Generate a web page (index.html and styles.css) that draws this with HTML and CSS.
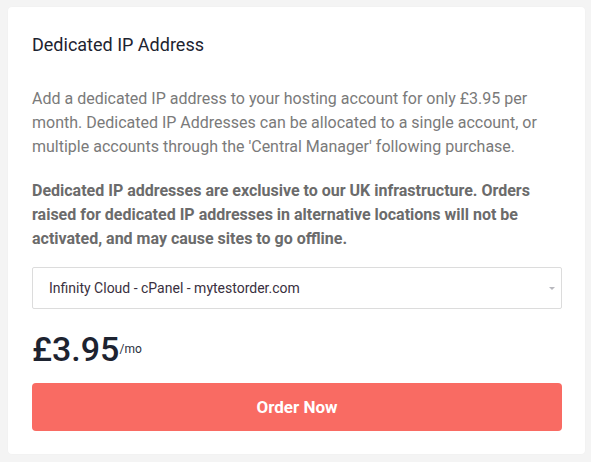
FILE: index.html
```html
<!DOCTYPE html>
<html>
<head>
<meta charset="utf-8">
<link rel="stylesheet" href="styles.css">
</head>
<body>
<div class="card">
  <h2 class="title">Dedicated IP Address</h2>
  <p class="desc">Add a dedicated IP address to your hosting account for only £3.95 per month. Dedicated IP Addresses can be allocated to a single account, or multiple accounts through the 'Central Manager' following purchase.</p>
  <p class="warn">Dedicated IP addresses are exclusive to our UK infrastructure. Orders raised for dedicated IP addresses in alternative locations will not be activated, and may cause sites to go offline.</p>
  <div class="select">
    <span class="select-text">Infinity Cloud - cPanel - mytestorder.com</span>
    <span class="caret"></span>
  </div>
  <div class="price"><span class="amount">£3.95</span><span class="per">/mo</span></div>
  <button class="order">Order Now</button>
</div>
</body>
</html>
```
FILE: styles.css
```css
html, body {
  margin: 0;
  padding: 0;
  background: #f4f4f4;
}
body {
  padding: 7px 6px 8px 8px;
  font-family: Roboto, "Liberation Sans", sans-serif;
}
.card {
  background: #fff;
  border-radius: 4px;
  padding: 27px 23px 23px 24px;
  box-shadow: 0 0 2px rgba(0,0,0,0.03);
}
.title {
  margin: 0;
  font-size: 18px;
  font-weight: 400;
  line-height: 22px;
  color: #1d2330;
}
.desc {
  margin: 31px 0 0;
  font-size: 16px;
  line-height: 24px;
  color: #7a7a7a;
}
.warn {
  margin: 20px 0 0;
  font-size: 16px;
  line-height: 24px;
  font-weight: 700;
  color: #6b6b6b;
}
.select {
  margin-top: 16px;
  height: 42px;
  box-sizing: border-box;
  border: 1px solid #dcdcdc;
  border-radius: 2px;
  display: flex;
  align-items: center;
  justify-content: space-between;
  padding: 0 6px 0 16px;
}
.select-text {
  font-size: 14px;
  color: #3a3040;
}
.caret {
  width: 0;
  height: 0;
  border-left: 3px solid transparent;
  border-right: 3px solid transparent;
  border-top: 3px solid #b8b8be;
}
.price {
  margin-top: 20px;
  display: flex;
  align-items: flex-start;
  color: #1d2330;
}
.amount {
  font-size: 34px;
  line-height: 40px;
  font-weight: 500;
}
.per {
  font-size: 12px;
  margin-top: 13px;
  color: #2b3040;
}
.order {
  display: block;
  width: 100%;
  margin-top: 14px;
  height: 48px;
  border: 0;
  border-radius: 4px;
  background: #f96b63;
  color: #fff;
  font-family: Roboto, "Liberation Sans", sans-serif;
  font-size: 17px;
  font-weight: 700;
}
```
